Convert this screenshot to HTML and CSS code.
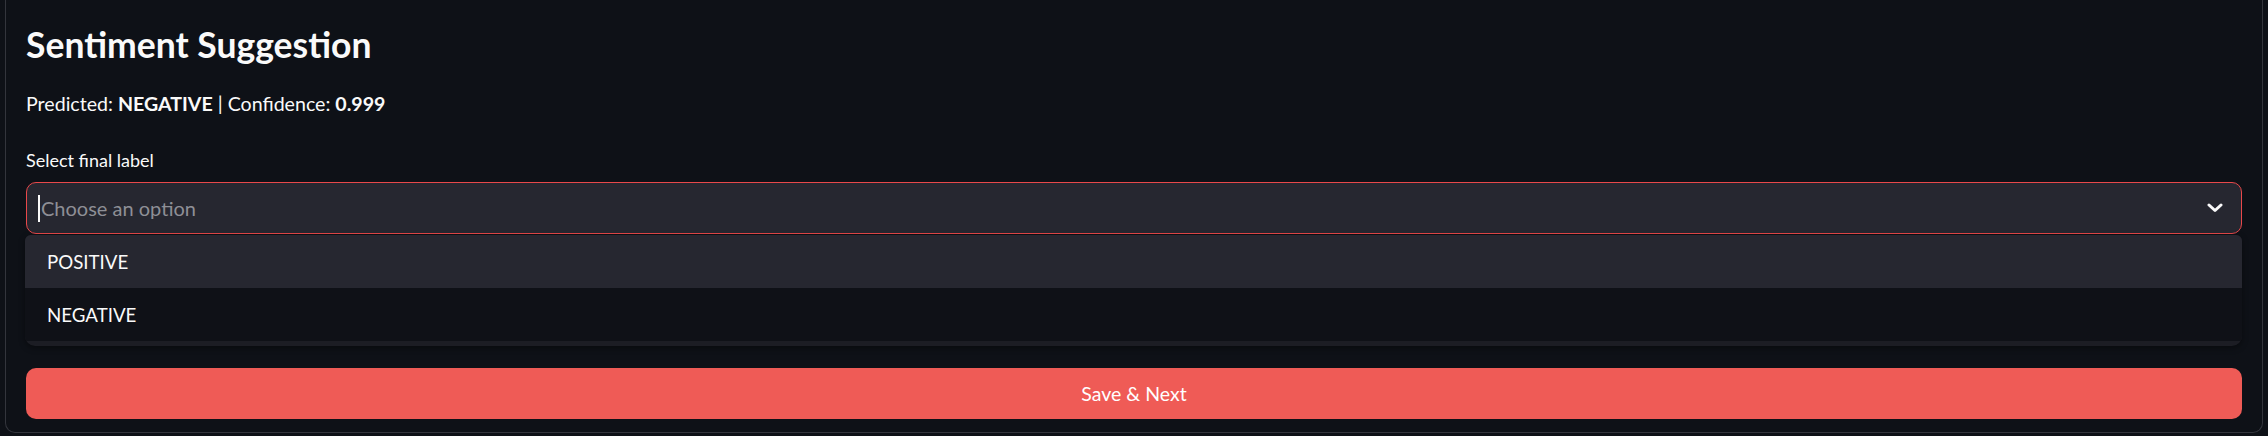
FILE: index.html
```html
<!DOCTYPE html>
<html lang="en">
<head>
<meta charset="utf-8">
<title>Sentiment Suggestion</title>
<link rel="stylesheet" href="styles.css">
</head>
<body>
<div class="panel">
  <h3 class="title">Sentiment Suggestion</h3>
  <p class="prediction">Predicted: <strong>NEGATIVE</strong> | Confidence: <strong>0.999</strong></p>
  <div class="field">
    <label class="field-label">Select final label</label>
    <div class="select-wrap">
      <div class="select">
        <span class="caret"></span>
        <span class="placeholder">Choose an option</span>
        <svg class="chevron" width="16" height="10" viewBox="0 0 16 10" aria-hidden="true">
          <polyline points="2,2 8,7.5 14,2" fill="none" stroke="#fafafa" stroke-width="3" stroke-linecap="round" stroke-linejoin="round"/>
        </svg>
      </div>
      <ul class="menu">
        <li class="option option-active">POSITIVE</li>
        <li class="option">NEGATIVE</li>
      </ul>
    </div>
  </div>
  <button class="primary-btn">Save &amp; Next</button>
</div>
</body>
</html>
```

FILE: styles.css
```css
html, body {
  margin: 0;
  padding: 0;
  background: #0e1117;
  height: 100%;
}
body {
  font-family: Lato, "Noto Sans", "Liberation Sans", sans-serif;
  color: #fafafa;
  overflow: hidden;
}
.panel {
  margin-left: 5px;
  width: 2258px;
  height: 433px;
  box-sizing: border-box;
  border: 1px solid #33353c;
  border-top: none;
  border-radius: 0 0 10px 10px;
  padding: 25px 20px 0 20px;
}
.title {
  margin: 0;
  font-size: 35.5px;
  line-height: 40px;
  font-weight: 700;
  color: #fafafa;
}
.prediction {
  margin: 27px 0 0 0;
  font-size: 19.6px;
  line-height: 24px;
  color: #fafafa;
}
.prediction strong { font-weight: 700; }
.field { margin-top: 33px; }
.field-label {
  display: block;
  font-size: 18px;
  line-height: 22px;
  color: #fafafa;
}
.select-wrap {
  position: relative;
  margin-top: 11px;
}
.select {
  height: 52px;
  box-sizing: border-box;
  border: 1px solid #e8484a;
  border-radius: 10px;
  background: #262730;
  display: flex;
  align-items: center;
  padding-left: 11px;
  padding-right: 18px;
}
.caret {
  width: 2px;
  height: 27px;
  background: #fafafa;
  margin-right: 1px;
}
.placeholder {
  flex: 1;
  font-size: 20px;
  color: #8e8f96;
}
.chevron { display: block; }
.menu {
  position: absolute;
  left: -1px;
  right: 0;
  top: 53px;
  margin: 0;
  padding: 0 0 5px 0;
  list-style: none;
  background: #1c1d24;
  border-radius: 6px 6px 10px 10px;
  overflow: hidden;
  box-shadow: 0 2px 6px rgba(0,0,0,0.4);
  z-index: 2;
}
.option {
  height: 53px;
  display: flex;
  align-items: center;
  padding-left: 22px;
  font-size: 18.7px;
  background: #0f1117;
  color: #fafafa;
}
.option-active { background: #262730; }
.primary-btn {
  display: flex;
  align-items: center;
  justify-content: center;
  width: 100%;
  height: 51px;
  margin-top: 134px;
  border: none;
  border-radius: 10px;
  background: #ef5b56;
  color: #ffffff;
  font-family: Lato, "Noto Sans", "Liberation Sans", sans-serif;
  font-size: 19.5px;
  padding: 0;
}
```
